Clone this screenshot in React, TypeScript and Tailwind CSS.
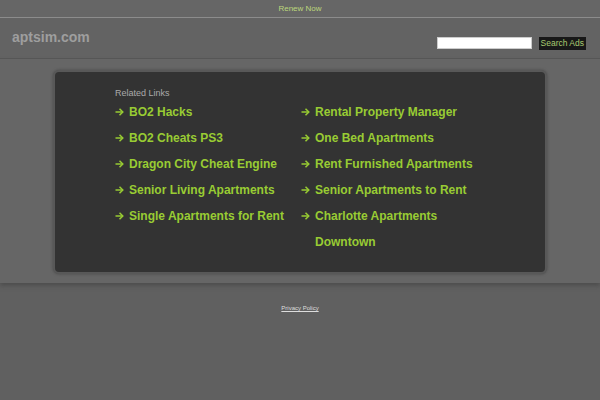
const leftLinks = [
  "BO2 Hacks",
  "BO2 Cheats PS3",
  "Dragon City Cheat Engine",
  "Senior Living Apartments",
  "Single Apartments for Rent",
];

const rightLinks = [
  "Rental Property Manager",
  "One Bed Apartments",
  "Rent Furnished Apartments",
  "Senior Apartments to Rent",
  "Charlotte Apartments Downtown",
];

function Arrow() {
  return (
    <svg viewBox="0 0 9 8" className="w-[9px] h-[8px]" fill="none" stroke="#99cc33" strokeWidth="1.5">
      <path d="M0.5 4h7.5" />
      <path d="M4.5 0.8L7.8 4L4.5 7.2" />
    </svg>
  );
}

function LinkItem({ label }: { label: string }) {
  return (
    <li className="flex">
      <span className="w-[14px] shrink-0 h-[26px] flex items-center">
        <Arrow />
      </span>
      <a href="#" className="text-[12px] font-bold text-[#9c3] hover:underline">
        {label}
      </a>
    </li>
  );
}

export default function App() {
  return (
    <div className="min-h-[400px] bg-[#606060] font-['Liberation_Sans',Arial,sans-serif]">
      <div className="h-[18px] border-b border-[#8c8c8c] bg-[#666] flex items-center justify-center">
        <a href="#" className="text-[8px] text-[#bcd67c]">Renew Now</a>
      </div>

      <header className="h-[41px] border-b border-[#575757] bg-[#636363] flex items-center justify-between pl-[12px] pr-[14px]">
        <span className="text-[14px] font-bold text-[#9e9e9e] -mt-[2px]">aptsim.com</span>
        <form className="flex items-center gap-[7px] mt-[10px]">
          <input className="w-[95px] h-[12px] bg-white border border-[#ccc] outline-none" />
          <button type="button" className="h-[13px] px-[2px] bg-[#181818] text-[#a9cb70] text-[8.5px] leading-[13px]">
            Search Ads
          </button>
        </form>
      </header>

      <main className="bg-[#666] pt-[11px] pb-[9px] shadow-[0_3px_4px_#4f4f4f]">
        <div className="mx-auto w-[494px] rounded-[6px] border-2 border-[#585858] bg-[#333] shadow-[0_0_3px_#474747] pt-[16px] pb-[17px] pl-[60px] text-[#9c3]">
          <p className="text-[9px] text-[#aaa] leading-[11px]">Related Links</p>
          <div className="flex">
            <ul className="w-[186px] leading-[26px]">
              {leftLinks.map((l) => (
                <LinkItem key={l} label={l} />
              ))}
            </ul>
            <ul className="w-[186px] leading-[26px]">
              {rightLinks.map((l) => (
                <LinkItem key={l} label={l} />
              ))}
            </ul>
          </div>
        </div>
      </main>

      <div className="pt-[10px] text-center">
        <a href="#" className="text-[6px] text-[#ddd] underline">Privacy Policy</a>
      </div>
    </div>
  );
}
